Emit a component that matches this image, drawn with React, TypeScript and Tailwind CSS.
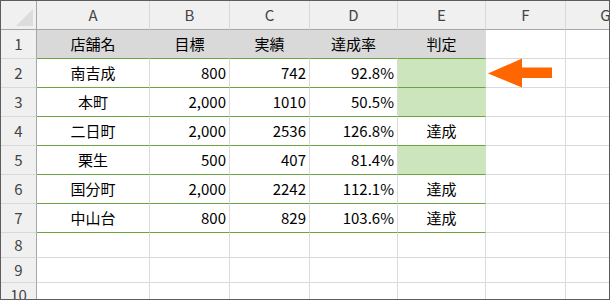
const font = { fontFamily: '"Noto Sans CJK JP", "Noto Sans", sans-serif' };

type Cell = { text?: string; align?: 'left' | 'center' | 'right'; fill?: 'head' | 'ok' };

const cols = ['A', 'B', 'C', 'D', 'E', 'F', 'G'];
const widths = ['w-[113px]', 'w-[80px]', 'w-[80px]', 'w-[88px]', 'w-[88px]', 'w-[80px]', 'w-[80px]'];

const data: Cell[][] = [
  [
    { text: '店舗名', align: 'center', fill: 'head' },
    { text: '目標', align: 'center', fill: 'head' },
    { text: '実績', align: 'center', fill: 'head' },
    { text: '達成率', align: 'center', fill: 'head' },
    { text: '判定', align: 'center', fill: 'head' },
  ],
  [
    { text: '南吉成', align: 'center' },
    { text: '800', align: 'right' },
    { text: '742', align: 'right' },
    { text: '92.8%', align: 'right' },
    { fill: 'ok' },
  ],
  [
    { text: '本町', align: 'center' },
    { text: '2,000', align: 'right' },
    { text: '1010', align: 'right' },
    { text: '50.5%', align: 'right' },
    { fill: 'ok' },
  ],
  [
    { text: '二日町', align: 'center' },
    { text: '2,000', align: 'right' },
    { text: '2536', align: 'right' },
    { text: '126.8%', align: 'right' },
    { text: '達成', align: 'center' },
  ],
  [
    { text: '栗生', align: 'center' },
    { text: '500', align: 'right' },
    { text: '407', align: 'right' },
    { text: '81.4%', align: 'right' },
    { fill: 'ok' },
  ],
  [
    { text: '国分町', align: 'center' },
    { text: '2,000', align: 'right' },
    { text: '2242', align: 'right' },
    { text: '112.1%', align: 'right' },
    { text: '達成', align: 'center' },
  ],
  [
    { text: '中山台', align: 'center' },
    { text: '800', align: 'right' },
    { text: '829', align: 'right' },
    { text: '103.6%', align: 'right' },
    { text: '達成', align: 'center' },
  ],
];

function RowHead({ n, h }: { n: number; h: string }) {
  return (
    <div className={`w-[36px] ${h} shrink-0 bg-[#f0f0f0] border-r border-r-[#a6a6a6] border-b border-b-[#d9d9d9] flex items-center justify-center text-[15px] text-[#444]`}>
      {n}
    </div>
  );
}

function DataRow({ n, cells }: { n: number; cells: Cell[] }) {
  return (
    <div className="flex">
      <RowHead n={n} h="h-[29px]" />
      {cols.map((c, i) => {
        const cell = cells[i];
        const inTable = i < 5;
        let bg = 'bg-white';
        let br = 'border-r-[#dadada]';
        if (cell?.fill === 'head') {
          bg = 'bg-[#d9d9d9]';
          br = 'border-r-[#d9d9d9]';
        } else if (cell?.fill === 'ok') {
          bg = 'bg-[#cde5bd]';
          br = 'border-r-[#cde5bd]';
        }
        const bb = inTable ? 'border-b-[#6ca444]' : 'border-b-[#dadada]';
        const al =
          cell?.align === 'right'
            ? 'justify-end pr-[3px]'
            : cell?.align === 'center'
              ? 'justify-center'
              : 'justify-start';
        return (
          <div
            key={c}
            className={`${widths[i]} h-[29px] shrink-0 border-r border-b ${br} ${bb} ${bg} flex items-center ${al} text-[15px] text-black`}
          >
            {cell?.text}
          </div>
        );
      })}
    </div>
  );
}

function EmptyRow({ n }: { n: number }) {
  return (
    <div className="flex">
      <RowHead n={n} h="h-[25px]" />
      {cols.map((c, i) => (
        <div key={c} className={`${widths[i]} h-[25px] shrink-0 border-r border-b border-[#dadada] bg-white`} />
      ))}
    </div>
  );
}

export default function App() {
  return (
    <div className="w-[610px] h-[300px] border border-[#5c5c5c] overflow-hidden relative bg-white" style={font}>
      {/* column header */}
      <div className="flex">
        <div className="w-[36px] h-[29px] shrink-0 bg-[#f0f0f0] border-r border-b border-[#a6a6a6] relative">
          <svg className="absolute left-0 top-0" width="36" height="29" viewBox="0 0 36 29">
            <polygon points="15,25 32,25 32,8" fill="#dcdcdc" />
          </svg>
        </div>
        {cols.map((c, i) => (
          <div
            key={c}
            className={`${widths[i]} h-[29px] shrink-0 bg-[#f0f0f0] border-r border-r-[#d9d9d9] border-b border-b-[#a6a6a6] flex items-center justify-center text-[15px] text-[#444]`}
          >
            {c}
          </div>
        ))}
      </div>
      {data.map((cells, idx) => (
        <DataRow key={idx} n={idx + 1} cells={cells} />
      ))}
      <EmptyRow n={8} />
      <EmptyRow n={9} />
      <EmptyRow n={10} />

      {/* arrow */}
      <svg className="absolute left-[486px] top-[56px]" width="70" height="34" viewBox="0 0 70 34">
        <polygon points="1,16.5 35,1.5 35,10.5 65,10.5 65,21 35,21 35,30.5" fill="#ff6600" />
      </svg>
    </div>
  );
}
